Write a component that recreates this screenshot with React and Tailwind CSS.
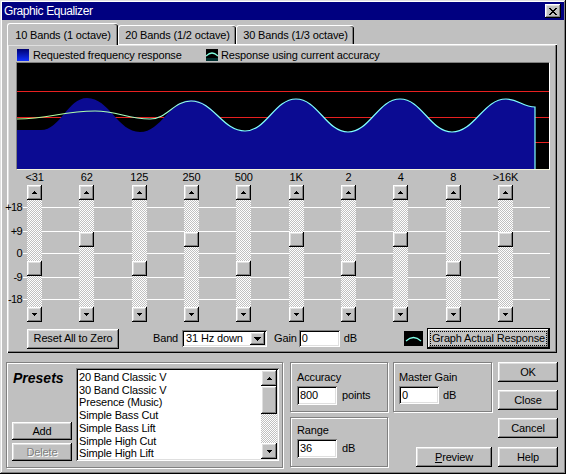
import React from "react";

const raised =
  "bg-[#c0c0c0] shadow-[inset_-1px_-1px_#000,inset_1px_1px_#fff,inset_-2px_-2px_#808080,inset_2px_2px_#dfdfdf]";
const sunken =
  "bg-white shadow-[inset_1px_1px_#808080,inset_-1px_-1px_#fff,inset_2px_2px_#000,inset_-2px_-2px_#dfdfdf]";
const etched = "border border-[#808080] shadow-[inset_1px_1px_#fff,1px_1px_#fff]";
const stipple =
  "bg-[image:repeating-conic-gradient(#fff_0%_25%,#c0c0c0_0%_50%)] bg-size-[2px_2px]";

function Tri({ dir, w = 5 }) {
  const rows = [];
  const h = Math.ceil(w / 2);
  for (let i = 0; i < h; i++) {
    const len = 1 + i * 2;
    const x = (w - len) / 2;
    const y = dir === "up" ? i : h - 1 - i;
    rows.push(<rect key={i} x={x} y={y} width={len} height={1} fill="#000" />);
  }
  return (
    <svg width={w} height={h} viewBox={`0 0 ${w} ${h}`} shapeRendering="crispEdges">
      {rows}
    </svg>
  );
}

function ArrowBtn({ dir, className = "", w = 5 }) {
  return (
    <div className={`flex items-center justify-center shrink-0 ${raised} ${className}`}>
      <Tri dir={dir} w={w} />
    </div>
  );
}

function smooth(pts) {
  let d = `M${pts[0][0]} ${pts[0][1]}`;
  for (let i = 1; i < pts.length; i++) {
    const [x0, y0] = pts[i - 1];
    const [x1, y1] = pts[i];
    const dx = (x1 - x0) * 0.42;
    d += ` C${x0 + dx} ${y0} ${x1 - dx} ${y1} ${x1} ${y1}`;
  }
  return d;
}

function Graph() {
  const blue = [
    [0, 67], [24, 67], [70, 35], [123, 69], [174, 37], [228, 68], [279, 36],
    [331, 69], [383, 36], [435, 69], [489, 36], [518, 44],
  ];
  const cyan = [
    [0, 56], [78, 48], [133, 56], [174, 38], [228, 68], [279, 36],
    [331, 69], [383, 36], [435, 69], [489, 36], [518, 44],
  ];
  return (
    <svg width="532" height="106" viewBox="0 0 532 106" className="block">
      <defs>
        <linearGradient id="cy" gradientUnits="userSpaceOnUse" x1="0" y1="0" x2="220" y2="0">
          <stop offset="0" stopColor="#b8ff90" />
          <stop offset="0.6" stopColor="#a0ffc8" />
          <stop offset="1" stopColor="#80ffff" />
        </linearGradient>
      </defs>
      <rect width="532" height="106" fill="#000" />
      <g shapeRendering="crispEdges">
        <rect x="0" y="28" width="532" height="1" fill="#e82020" />
        <rect x="0" y="54" width="532" height="1" fill="#e82020" />
        <rect x="0" y="79" width="532" height="1" fill="#e82020" />
      </g>
      <path d={smooth(blue) + " L518 106 L0 106 Z"} fill="#0b0b92" />
      <path d={smooth(cyan) + " L518 106"} fill="none" stroke="url(#cy)" strokeWidth="1.2" />
    </svg>
  );
}

const X_PATTERN = ["11000011", "01100110", "00111100", "00011000", "00111100", "01100110", "11000011"];

export default function App() {
  const bands = ["<31", "62", "125", "250", "500", "1K", "2", "4", "8", ">16K"];
  const thumbs = [61, 32, 61, 32, 61, 32, 61, 32, 61, 32];
  const presets = [
    "20 Band Classic V",
    "30 Band Classic V",
    "Presence (Music)",
    "Simple Bass Cut",
    "Simple Bass Lift",
    "Simple High Cut",
    "Simple High Lift",
  ];
  const grid = [
    { label: "+18", mt: "mt-[22px]" },
    { label: "+9", mt: "mt-[23px]" },
    { label: "0", mt: "mt-[21px]" },
    { label: "-9", mt: "mt-[23px]" },
    { label: "-18", mt: "mt-[21px]" },
  ];

  return (
    <div className="w-[566px] h-[474px] overflow-hidden bg-[#c0c0c0] p-[2px] font-['Liberation_Sans',Arial,sans-serif] text-[11px] tracking-[-0.15px] text-black shadow-[inset_-1px_-1px_#000,inset_1px_1px_#dfdfdf,inset_-2px_-2px_#808080,inset_2px_2px_#fff]">
      {/* Title bar */}
      <div className="h-[18px] bg-[#000080] flex items-center justify-between">
        <span className="ml-[2px] text-white text-[12px] tracking-[-0.4px] leading-none">Graphic Equalizer</span>
        <div className={`w-[16px] h-[14px] mr-[3px] flex items-center justify-center ${raised}`}>
          <svg width="8" height="7" viewBox="0 0 8 7" shapeRendering="crispEdges">
            {X_PATTERN.flatMap((row, y) =>
              row.split("").map((c, x) =>
                c === "1" ? <rect key={`${x}-${y}`} x={x} y={y} width="1" height="1" fill="#000" /> : null
              )
            )}
          </svg>
        </div>
      </div>

      {/* Tabs */}
      <div className="flex items-end mt-[3px] ml-[5px] h-[21px]">
        <div className="relative z-10 -mb-px h-[22px] w-[111px] bg-[#c0c0c0] rounded-t-[3px] border-t border-l border-white shadow-[inset_-1px_0_#000,inset_-2px_0_#808080] pt-[5px] text-center leading-[13px]">
          10 Bands (1 octave)
        </div>
        <div className="h-[19px] w-[118px] rounded-t-[3px] border-t border-l border-white shadow-[inset_-1px_0_#000,inset_-2px_0_#808080] pt-[3px] text-center leading-[13px]">
          20 Bands (1/2 octave)
        </div>
        <div className="h-[19px] w-[118px] rounded-t-[3px] border-t border-l border-white shadow-[inset_-1px_0_#000,inset_-2px_0_#808080] pt-[3px] text-center leading-[13px]">
          30 Bands (1/3 octave)
        </div>
      </div>

      {/* Tab panel */}
      <div className="ml-[5px] w-[550px] h-[309px] flex flex-col shadow-[inset_1px_1px_#fff,inset_-1px_-1px_#000,inset_-2px_-2px_#808080,inset_2px_2px_#dfdfdf]">
        {/* Legend */}
        <div className="flex items-center h-[14px] mt-[4px] ml-[10px]">
          <div className="flex items-center w-[189px]">
            <div className="w-[12px] h-[12px] bg-[linear-gradient(#000070,#1030ff)]" />
            <span className="ml-[4px] leading-[13px]">Requested frequency response</span>
          </div>
          <svg width="12" height="12" viewBox="0 0 12 12" className="block">
            <rect width="12" height="12" fill="#000" />
            <path d="M0 7 Q6 1 12 7" fill="none" stroke="#80ffe0" strokeWidth="1.2" />
            <rect x="0" y="9" width="12" height="3" fill="#003030" />
          </svg>
          <span className="ml-[3px] leading-[13px]">Response using current accuracy</span>
        </div>

        {/* Graph */}
        <div className="ml-[9px] w-[534px] h-[108px] border border-t-[#808080] border-l-[#808080] border-b-[#f4f4dc] border-r-white">
          <Graph />
        </div>

        {/* Band labels */}
        <div className="flex mt-[2px] h-[11px] ml-[20px] gap-[37.33px]">
          {bands.map((b) => (
            <div key={b} className="w-[15px] flex justify-center whitespace-nowrap leading-[11px]">
              {b}
            </div>
          ))}
        </div>

        {/* Sliders with grid lines */}
        <div className="grid mt-[2px] ml-[2px] w-[541px] h-[137px]">
          <div className="col-start-1 row-start-1 flex flex-col">
            {grid.map((g) => (
              <div key={g.label} className={`flex items-center h-px ${g.mt}`}>
                <div className="w-[13px] shrink-0 flex justify-end items-center h-px">
                  <span className="leading-[11px] whitespace-nowrap tracking-[-0.6px]">{g.label}</span>
                </div>
                <div className="ml-px flex-1 h-px bg-white" />
              </div>
            ))}
          </div>
          <div className="col-start-1 row-start-1 flex ml-[18px] gap-[37.33px]">
            {thumbs.map((t, i) => (
              <div key={i} className="flex flex-col w-[15px]">
                <ArrowBtn dir="up" className="w-[15px] h-[15px]" />
                <div className={`h-[107px] w-[15px] flex flex-col ${stipple}`}>
                  <div className={`w-[15px] h-[15px] ${raised} ${t === 32 ? "mt-[32px]" : "mt-[61px]"}`} />
                </div>
                <ArrowBtn dir="down" className="w-[15px] h-[15px]" />
              </div>
            ))}
          </div>
        </div>

        {/* Controls row */}
        <div className="flex items-center mt-[6px] h-[21px]">
          <div className={`ml-[20px] w-[92px] h-[20px] flex items-center justify-center ${raised}`}>Reset All to Zero</div>
          <span className="ml-[34px]">Band</span>
          <div className={`ml-[4px] w-[85px] h-[17px] flex items-center ${sunken}`}>
            <span className="pl-[4px] leading-[13px]">31 Hz down</span>
            <ArrowBtn dir="down" w={7} className="ml-auto mr-[2px] w-[15px] h-[13px]" />
          </div>
          <span className="ml-[7px]">Gain</span>
          <div className={`ml-[2px] w-[41px] h-[17px] flex items-center pl-[3px] ${sunken}`}>0</div>
          <span className="ml-[4px]">dB</span>
          <div className="ml-auto mr-[7px] flex items-center">
            <svg width="19" height="15" viewBox="0 0 19 15" className="block">
              <rect width="19" height="15" fill="#000" />
              <path d="M2 10 Q9.5 3 17 10" fill="none" stroke="#80ffe8" strokeWidth="1.2" />
            </svg>
            <div className="ml-[4px] w-[123px] h-[21px] border border-black p-[2px] shadow-[inset_-1px_-1px_#000,inset_1px_1px_#fff,inset_-2px_-2px_#808080]">
              <div className="w-full h-full border border-dotted border-black flex items-center justify-center leading-[11px]">
                Graph Actual Response
              </div>
            </div>
          </div>
        </div>
      </div>

      {/* Bottom section */}
      <div className="flex mt-[9px] ml-[4px]">
        {/* Presets */}
        <div className={`w-[277px] h-[106px] flex pt-[5px] pb-[6px] ${etched}`}>
          <div className="ml-[5px] w-[60px] flex flex-col">
            <div className="mt-[2px] ml-[1px] text-[14px] font-bold italic leading-[16px] tracking-normal">Presets</div>
            <div className={`mt-auto h-[18px] flex items-center justify-center ${raised}`}>Add</div>
            <div className={`mt-[3px] h-[18px] flex items-center justify-center text-[#808080] [text-shadow:1px_1px_#fff] ${raised}`}>
              Delete
            </div>
          </div>
          <div className={`ml-[4px] w-[203px] flex p-[2px] ${sunken}`}>
            <div className="flex-1 pl-[1px] pt-px leading-[12.7px] overflow-hidden whitespace-nowrap">
              {presets.map((p) => (
                <div key={p}>{p}</div>
              ))}
            </div>
            <div className="w-[16px] flex flex-col">
              <ArrowBtn dir="up" className="h-[16px]" />
              <div className={`h-[28px] ${raised}`} />
              <div className={`flex-1 ${stipple}`} />
              <ArrowBtn dir="down" className="h-[16px]" />
            </div>
          </div>
        </div>

        {/* Accuracy & Range */}
        <div className="ml-[7px] w-[98px] flex flex-col">
          <div className={`h-[50px] flex flex-col pl-[6px] ${etched}`}>
            <div className="mt-[8px] leading-[13px]">Accuracy</div>
            <div className="mt-[2px] flex items-center">
              <div className={`w-[40px] h-[19px] flex items-center pl-[3px] ${sunken}`}>800</div>
              <span className="ml-[5px]">points</span>
            </div>
          </div>
          <div className={`mt-[5px] h-[50px] flex flex-col pl-[6px] ${etched}`}>
            <div className="mt-[6px] leading-[13px]">Range</div>
            <div className="mt-[2px] flex items-center">
              <div className={`w-[40px] h-[19px] flex items-center pl-[3px] ${sunken}`}>36</div>
              <span className="ml-[5px]">dB</span>
            </div>
          </div>
        </div>

        {/* Master gain & Preview */}
        <div className="ml-[5px] w-[99px] flex flex-col">
          <div className={`h-[50px] flex flex-col pl-[5px] ${etched}`}>
            <div className="mt-[8px] leading-[13px]">Master Gain</div>
            <div className="mt-[2px] flex items-center">
              <div className={`w-[40px] h-[18px] flex items-center pl-[3px] ${sunken}`}>0</div>
              <span className="ml-[4px]">dB</span>
            </div>
          </div>
          <div className={`mt-[35px] ml-auto w-[76px] h-[20px] flex items-center justify-center ${raised}`}>
            <span>
              <span className="underline">P</span>review
            </span>
          </div>
        </div>

        {/* Buttons */}
        <div className="ml-[6px] w-[60px] flex flex-col">
          <div className={`h-[20px] flex items-center justify-center ${raised}`}>OK</div>
          <div className={`mt-[8px] h-[20px] flex items-center justify-center ${raised}`}>Close</div>
          <div className={`mt-[8px] h-[20px] flex items-center justify-center ${raised}`}>Cancel</div>
          <div className={`mt-[9px] h-[20px] flex items-center justify-center ${raised}`}>Help</div>
        </div>
      </div>
    </div>
  );
}
